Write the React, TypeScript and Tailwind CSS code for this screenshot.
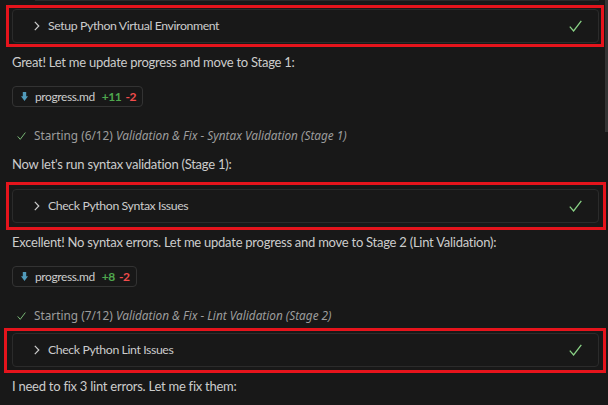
import React from "react";

const Check = ({ className }: { className?: string }) => (
  <svg viewBox="0 0 13 12" className={className} fill="none">
    <polyline points="0.8,6.6 4.6,11 12.3,0.8" stroke="#89d185" strokeWidth="1.3" />
  </svg>
);

const Chevron = () => (
  <svg viewBox="0 0 6 10" className="w-[6px] h-[10px]" fill="none">
    <polyline points="0.8,0.8 4.8,5 0.8,9.2" stroke="#cccccc" strokeWidth="1.2" />
  </svg>
);

const MdIcon = () => (
  <svg viewBox="0 0 7 9" className="w-[7px] h-[9px]">
    <polygon points="1.8,0 5.2,0 5.2,4.3 7,4.3 3.5,9 0,4.3 1.8,4.3" fill="#519aba" />
  </svg>
);

// tool call row, with the red annotation drawn over it
const ToolBox = ({ title, redClass }: { title: string; redClass: string }) => (
  <div className="relative">
    <div className="h-[34px] flex items-center pl-[21px] pr-[16px] border border-[#2b2b2b] rounded-[4px] bg-[#181818]">
      <Chevron />
      <span className="ml-[8px] text-[12.3px] tracking-[-0.4px] text-[#cccccc]">{title}</span>
      <Check className="ml-auto w-[13px] h-[12px]" />
    </div>
    <div className={"absolute border-[3px] border-[#e5141c] pointer-events-none " + redClass} />
  </div>
);

const FilePill = ({ add, del }: { add: string; del: string }) => (
  <div className="self-start h-[21px] flex items-center gap-[7px] pl-[8px] pr-[6px] border border-[#333333] rounded-[4px] text-[12px] tracking-[-0.4px]">
    <MdIcon />
    <span className="text-[#cccccc]">progress.md</span>
    <span className="flex gap-[4px] font-bold">
      <span className="text-[#4fa74e]">{add}</span>
      <span className="text-[#f14c4c]">{del}</span>
    </span>
  </div>
);

const Status = ({ step, text }: { step: string; text: string }) => (
  <div
    className="h-[20px] flex items-center pl-[5px] text-[11.8px] text-[#9d9d9d]"
    style={{ fontFamily: '"Noto Sans", sans-serif' }}
  >
    <Check className="w-[9px] h-[8px]" />
    <span className="ml-[8px]">
      Starting ({step}) <i>{text}</i>
    </span>
  </div>
);

const Para = ({ children, className }: { children: React.ReactNode; className?: string }) => (
  <div className={"h-[20px] leading-[20px] text-[13px] tracking-[-0.25px] text-[#cccccc] " + (className ?? "")}>{children}</div>
);

export default function App() {
  return (
    <div
      className="relative w-[608px] h-[405px] overflow-hidden bg-[#181818]"
      style={{ fontFamily: 'Lato, "Noto Sans", sans-serif' }}
    >
      <div className="flex flex-col pl-[12px] pr-[9px]">
        <div className="h-[1px] ml-[23px] bg-[#2b2b2b] mb-[8px]" />

        <ToolBox title="Setup Python Virtual Environment" redClass="-left-[6px] -right-[5px] -top-[4px] -bottom-[4px]" />
        <Para className="mt-[9px] mb-[14px]">Great! Let me update progress and move to Stage 1:</Para>
        <FilePill add="+11" del="-2" />
        <div className="mt-[19px] mb-[8px]">
          <Status step="6/12" text="Validation & Fix - Syntax Validation (Stage 1)" />
        </div>
        <Para className="mb-[15px]">Now let's run syntax validation (Stage 1):</Para>

        <ToolBox title="Check Python Syntax Issues" redClass="-left-[6px] -right-[7px] -top-[7px] -bottom-[7px]" />
        <Para className="mt-[9px] mb-[14px]">
          Excellent! No syntax errors. Let me update progress and move to Stage 2 (Lint Validation):
        </Para>
        <FilePill add="+8" del="-2" />
        <div className="mt-[19px] mb-[7px]">
          <Status step="7/12" text="Validation & Fix - Lint Validation (Stage 2)" />
        </div>

        <ToolBox title="Check Python Lint Issues" redClass="-left-[8px] -right-[7px] -top-[5px] -bottom-[6px]" />
        <Para className="mt-[9px]">I need to fix 3 lint errors. Let me fix them:</Para>
      </div>

      <div className="absolute right-0 top-0 w-[3px] h-[132px] bg-[#343434]" />
    </div>
  );
}
